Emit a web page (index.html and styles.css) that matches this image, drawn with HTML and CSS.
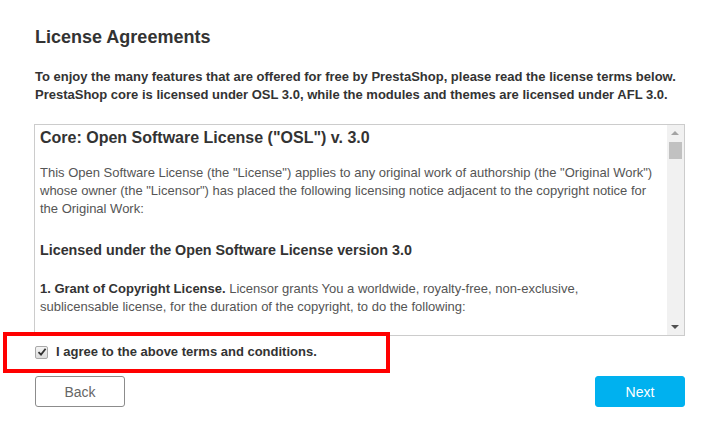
FILE: index.html
```html
<!DOCTYPE html>
<html>
<head>
<meta charset="utf-8">
<link rel="stylesheet" href="styles.css">
</head>
<body>
<div class="page">
  <h1 class="title">License Agreements</h1>
  <p class="intro">To enjoy the many features that are offered for free by PrestaShop, please read the license terms below.<br>PrestaShop core is licensed under OSL 3.0, while the modules and themes are licensed under AFL 3.0.</p>
  <div class="license-box">
    <div class="license-content">
      <h2 class="lic-title">Core: Open Software License ("OSL") v. 3.0</h2>
      <p class="lic-p first">This Open Software License (the "License") applies to any original work of authorship (the "Original Work") whose owner (the "Licensor") has placed the following licensing notice adjacent to the copyright notice for the Original Work:</p>
      <p class="lic-strong">Licensed under the Open Software License version 3.0</p>
      <p class="lic-p grant"><b class="dark">1. Grant of Copyright License.</b> Licensor grants You a worldwide, royalty-free, non-exclusive, sublicensable license, for the duration of the copyright, to do the following:</p>
    </div>
    <div class="scrollbar">
      <div class="arrow up"></div>
      <div class="track"><div class="thumb"></div></div>
      <div class="arrow down"></div>
    </div>
  </div>
  <div class="agree-wrap">
    <label class="agree">
      <span class="check"><svg width="10" height="10" viewBox="0 0 10 10"><path d="M1.5 5.2 L4 7.6 L8.6 1.8" fill="none" stroke="#333" stroke-width="1.8"/></svg></span>
      <span>I agree to the above terms and conditions.</span>
    </label>
    <div class="highlight"></div>
  </div>
  <div class="buttons">
    <button class="btn back">Back</button>
    <button class="btn next">Next</button>
  </div>
</div>
</body>
</html>
```

FILE: styles.css
```css
* { box-sizing: border-box; }
html, body { margin: 0; padding: 0; background: #fff; }
body { font-family: "Liberation Sans", Arial, sans-serif; color: #333; }
.page { padding: 27px 0 0 34px; width: 685px; }
.title { margin: 0 0 0 1px; font-size: 18px; line-height: 20px; font-weight: bold; color: #333; }
.intro { margin: 21px 0 0 1px; font-size: 13px; line-height: 18px; font-weight: bold; color: #333; }
.license-box { margin-top: 20px; height: 212px; border: 1px solid #ccc; display: flex; overflow: hidden; }
.license-content { flex: 1; padding: 3px 10px 0 5px; overflow: hidden; color: #555; font-size: 13px; line-height: 18px; }
.lic-title { margin: 0; font-size: 16px; line-height: 20px; font-weight: bold; color: #333; }
.lic-p { margin: 0; }
.lic-p.first { margin-top: 16px; }
.lic-strong { margin: 23px 0 0; font-weight: bold; font-size: 14.3px; color: #333; }
.lic-p.grant { margin-top: 21px; }
.dark { color: #333; }
.scrollbar { width: 17px; flex: none; background: #f1f1f1; display: flex; flex-direction: column; }
.arrow { height: 17px; position: relative; }
.arrow::after { content: ""; position: absolute; left: 4px; width: 0; height: 0; border-left: 4px solid transparent; border-right: 4px solid transparent; }
.arrow.up::after { top: 6px; border-bottom: 4px solid #a3a3a3; }
.arrow.down::after { top: 7px; border-top: 4px solid #505050; }
.track { flex: 1; padding: 0 2px; }
.thumb { height: 17px; background: #c1c1c1; }
.agree-wrap { position: relative; margin-top: 7px; }
.agree { display: flex; align-items: center; gap: 8px; font-size: 13px; line-height: 18px; font-weight: bold; color: #333; margin-left: 1px; }
.check { width: 13px; height: 13px; border: 1px solid #a9a9a9; border-radius: 2px; background: linear-gradient(#f4f4f4, #dcdcdc); display: flex; align-items: center; justify-content: center; }
.highlight { position: absolute; left: -31px; top: -11px; width: 387px; height: 41px; border: 4px solid #f00; }
.buttons { display: flex; justify-content: space-between; margin-top: 15px; margin-left: 1px; }
.btn { width: 90px; height: 31px; border-radius: 3px; font-family: "Liberation Sans", Arial, sans-serif; font-size: 14px; cursor: pointer; }
.back { background: #fff; border: 1px solid #8c8c8c; color: #666; }
.next { background: #00b1ef; border: 1px solid #00b1ef; color: #fff; }
```
